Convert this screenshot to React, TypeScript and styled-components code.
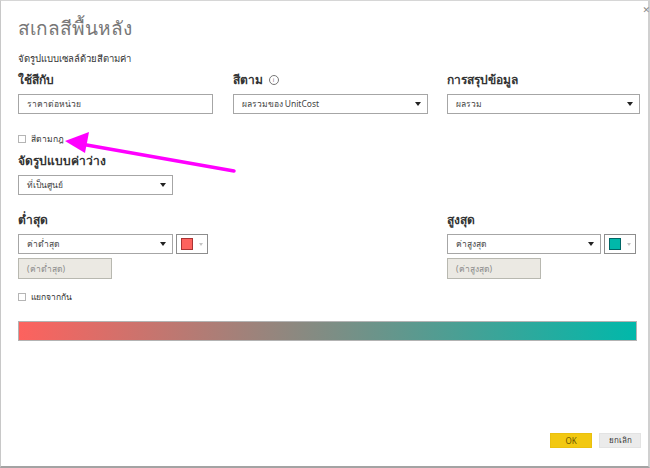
import React from 'react';
import styled, { createGlobalStyle } from 'styled-components';

const GlobalStyle = createGlobalStyle`
  html, body {
    margin: 0;
    padding: 0;
    background: #ffffff;
  }
  body {
    font-family: "Segoe UI", "Noto Sans", "DejaVu Sans", sans-serif;
    color: #333333;
  }
`;

const Dialog = styled.div`
  position: relative;
  box-sizing: border-box;
  width: 650px;
  height: 468px;
  border-top: 1px solid #d6d6d6;
  border-left: 1px solid #c8c8c8;
  border-right: 2px solid #d0d0d0;
  border-bottom: 2px solid #a3a3a3;
  padding: 14px 7px 0 17px;
  display: flex;
  flex-direction: column;
  background: #fff;
`;

const CloseMark = styled.span`
  position: absolute;
  top: 2px;
  right: -2px;
  font-size: 9px;
  color: #888;
`;

const Title = styled.h1`
  margin: 0;
  font-size: 19px;
  font-weight: 300;
  line-height: 26px;
  color: #777777;
`;

const Subtitle = styled.div`
  margin-top: 11px;
  font-size: 9.5px;
  line-height: 14px;
  color: #333;
`;

const Row = styled.div`
  display: grid;
  grid-template-columns: 195px 195px 193px;
  column-gap: 19.5px;
  margin-top: 5px;
`;

const Field = styled.div`
  display: flex;
  flex-direction: column;
`;

const Label = styled.div<{ $top?: number }>`
  margin-top: ${({ $top }) => $top ?? 0}px;
  height: 18px;
  line-height: 18px;
  font-size: 12px;
  font-weight: 700;
  color: #333;
  display: flex;
  align-items: center;
  gap: 6px;
`;

const InfoIcon = styled.span`
  display: inline-flex;
  align-items: center;
  justify-content: center;
  width: 8px;
  height: 8px;
  border: 1px solid #777;
  border-radius: 50%;
  font-size: 6px;
  font-weight: 400;
  color: #777;
`;

const Box = styled.div<{ $width?: number; $disabled?: boolean }>`
  box-sizing: border-box;
  width: ${({ $width }) => ($width ? `${$width}px` : '100%')};
  height: 20px;
  margin-top: 5px;
  border: 1px solid ${({ $disabled }) => ($disabled ? '#b8b8b0' : '#a6a6a6')};
  background: ${({ $disabled }) => ($disabled ? '#ebe9e3' : '#ffffff')};
  padding: 0 6px 0 8px;
  display: flex;
  align-items: center;
  justify-content: space-between;
  font-size: 8.5px;
  color: ${({ $disabled }) => ($disabled ? '#8a8a8a' : '#444')};
`;

const Caret = styled.span`
  width: 0;
  height: 0;
  border-left: 3px solid transparent;
  border-right: 3px solid transparent;
  border-top: 4px solid #222;
`;

const CheckRow = styled.label<{ $top: number }>`
  margin-top: ${({ $top }) => $top}px;
  display: flex;
  align-items: center;
  gap: 5px;
  font-size: 8.5px;
  color: #333;
  height: 12px;
`;

const CheckBox = styled.span`
  box-sizing: border-box;
  width: 8px;
  height: 8px;
  border: 1px solid #b5b5b5;
  background: #fff;
`;

const PickerRow = styled.div`
  display: flex;
  gap: 3px;
  margin-top: 5px;
`;

const ColorPicker = styled.div`
  box-sizing: border-box;
  width: 32px;
  height: 20px;
  border: 1px solid #8d8d8d;
  display: flex;
  align-items: center;
  padding: 0 4px;
  gap: 6px;
`;

const Swatch = styled.span<{ $color: string; $edge: string }>`
  box-sizing: border-box;
  width: 12px;
  height: 12px;
  background: ${({ $color }) => $color};
  border: 1px solid ${({ $edge }) => $edge};
`;

const LightCaret = styled.span`
  width: 0;
  height: 0;
  border-left: 2.5px solid transparent;
  border-right: 2.5px solid transparent;
  border-top: 3px solid #c4c4c4;
`;

const MinMaxRow = styled.div`
  display: flex;
  justify-content: space-between;
  margin-top: 16px;
  padding-right: 5px;
`;

const GradientBar = styled.div`
  box-sizing: border-box;
  margin-top: 18px;
  width: 619px;
  height: 20px;
  border: 1px solid #b3b3b3;
  background: linear-gradient(to right, #fd625e, #01b8aa);
`;

const Footer = styled.div`
  margin-top: auto;
  margin-bottom: 18px;
  display: flex;
  justify-content: flex-end;
  gap: 7px;
`;

const Button = styled.button<{ $primary?: boolean }>`
  width: 42px;
  height: 15px;
  padding: 0;
  font-family: inherit;
  font-size: 8px;
  color: ${({ $primary }) => ($primary ? '#6a5600' : '#333')};
  background: ${({ $primary }) => ($primary ? '#f2c811' : '#ebebeb')};
  border: 1px solid ${({ $primary }) => ($primary ? '#eac00f' : '#e3e3e3')};
`;

const Arrow = styled.svg`
  position: absolute;
  left: 0;
  top: 0;
  pointer-events: none;
`;

function Select({ text, width }: { text: string; width?: number }) {
  return (
    <Box $width={width}>
      <span>{text}</span>
      <Caret />
    </Box>
  );
}

function Bound({ label, select, placeholder, color, edge }: {
  label: string; select: string; placeholder: string; color: string; edge: string;
}) {
  return (
    <Field>
      <Label>{label}</Label>
      <PickerRow>
        <Box $width={155} style={{ marginTop: 0 }}>
          <span>{select}</span>
          <Caret />
        </Box>
        <ColorPicker>
          <Swatch $color={color} $edge={edge} />
          <LightCaret />
        </ColorPicker>
      </PickerRow>
      <Box $width={94} $disabled style={{ height: 21, marginTop: 4 }}>
        <span>{placeholder}</span>
      </Box>
    </Field>
  );
}

export default function App() {
  return (
    <>
      <GlobalStyle />
      <Dialog>
        <CloseMark>✕</CloseMark>
        <Title>สเกลสีพื้นหลัง</Title>
        <Subtitle>จัดรูปแบบเซลล์ด้วยสีตามค่า</Subtitle>

        <Row>
          <Field>
            <Label>ใช้สีกับ</Label>
            <Box>
              <span>ราคาต่อหน่วย</span>
            </Box>
          </Field>
          <Field>
            <Label>
              สีตาม <InfoIcon>i</InfoIcon>
            </Label>
            <Select text="ผลรวมของ UnitCost" />
          </Field>
          <Field>
            <Label>การสรุปข้อมูล</Label>
            <Select text="ผลรวม" />
          </Field>
        </Row>

        <CheckRow $top={19}>
          <CheckBox />
          สีตามกฎ
        </CheckRow>

        <Label $top={7}>จัดรูปแบบค่าว่าง</Label>
        <Select text="ที่เป็นศูนย์" width={155} />

        <MinMaxRow>
          <Bound label="ต่ำสุด" select="ค่าต่ำสุด" placeholder="(ค่าต่ำสุด)" color="#fd625e" edge="#a33" />
          <div style={{ width: 189 }}>
            <Bound label="สูงสุด" select="ค่าสูงสุด" placeholder="(ค่าสูงสุด)" color="#01b8aa" edge="#066" />
          </div>
        </MinMaxRow>

        <CheckRow $top={12}>
          <CheckBox />
          แยกจากกัน
        </CheckRow>

        <GradientBar />

        <Footer>
          <Button $primary>OK</Button>
          <Button>ยกเลิก</Button>
        </Footer>

        <Arrow width="650" height="468" viewBox="0 0 650 468">
          <line x1="233" y1="170" x2="80" y2="143" stroke="#ff00ff" strokeWidth="3.5" strokeLinecap="round" />
          <polygon points="64,140 88,131 84,152" fill="#ff00ff" />
        </Arrow>
      </Dialog>
    </>
  );
}
